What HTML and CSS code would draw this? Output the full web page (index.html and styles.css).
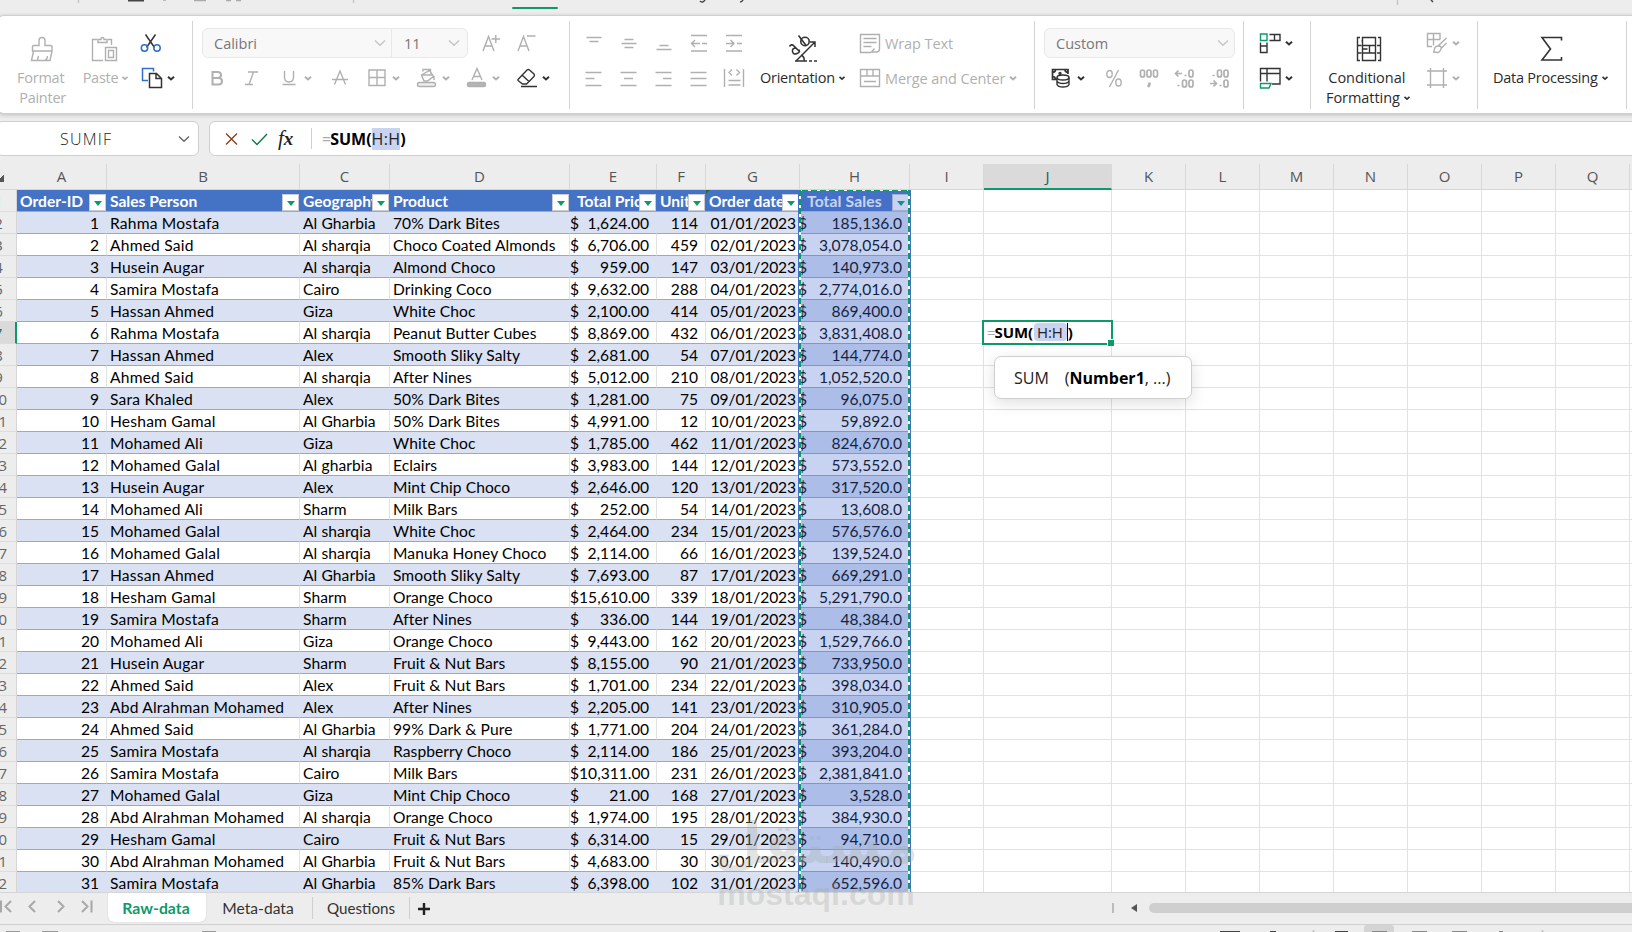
FILE: index.html
```html
<!DOCTYPE html>
<html lang="en">
<head>
    <meta charset="UTF-8">
    <meta name="viewport" content="width=device-width, initial-scale=1.0">
    <title>Raw-data</title>
    <link rel="stylesheet" href="styles.css">
</head>
<body>
<svg class="defs" width="0" height="0">
    <symbol id="chev" viewBox="0 0 16 24"><path d="M5 10.700l3 2.700 3-2.700" stroke-width="2"/></symbol>
    <symbol id="chev-thin" viewBox="0 0 16 24"><path d="M3 9.500l5 4.800 5-4.800" stroke-width="1.300"/></symbol>
</svg>
<div class="menubar">
    <svg width="1632" height="16" viewBox="0 0 1632 16">
        <path d="M78.500 0v3M353.500 0v3M1397.500 0v5" stroke="#c4c4c4"/>
        <path d="M128 .5h16" stroke="#444" stroke-width="2"/>
        <path d="M163 0h3M194 .5h12M226 .5h5M236 .5h5" stroke="#aaa" stroke-width="1.500"/>
        <path d="M700 1q3 2.500 5-1M740 2q2 0 3-2M1431 0l2 2" stroke="#444" stroke-width="1.500" fill="none"/>
        <path d="M513 8h44" stroke="#0e9a68" stroke-width="2" stroke-linecap="round"/>
    </svg>
</div>

<div class="ribbon">
    <div class="group g-clip">
        <div class="big off">
            <svg width="26" height="26" viewBox="0 0 26 26"><path d="M3.500 15v-4.500q0-1 1-1h5.500v-5q0-3 3-3t3 3v5h6q1 0 1 1V15zM4.500 15L2.500 24.500h18.500l2-9.500M8.500 24l1-4M16.500 24q2-1 2-4"/></svg>
            <span>Format<br>&thinsp;Painter</span>
        </div>
        <div class="big off paste">
            <svg width="28" height="26" viewBox="0 0 28 26"><path d="M7 3.500H2.500v21H13M18 3.500h3.500V9M8 6.500V3.500h3q0-2 1.500-2t1.500 2h3v3zM15.500 11.500h11v13h-11zM18.500 14.500h5v7h-5z"/></svg>
            <span>Paste<svg class="chev"><use href="#chev"/></svg></span>
        </div>
        <div class="pair">
            <svg width="24" height="24" viewBox="0 0 24 24"><path d="M6.500 3.500l9 13M16.500 3.500l-9 13" stroke="#333" stroke-width="1.500"/><circle cx="5.500" cy="17" r="3.200" stroke="#2f6fd0" stroke-width="1.500"/><circle cx="18" cy="17" r="3.200" stroke="#2f6fd0" stroke-width="1.500"/></svg>
            <div class="line"><svg width="24" height="24" viewBox="0 0 24 24"><path d="M9 14.500H3.500V2.500h11v3" stroke="#2f6fd0" stroke-width="1.500"/><path d="M10.500 7.500h7l5 5v9h-12zM17 7.500v5h5.500" stroke="#333" stroke-width="1.500"/></svg><svg class="chev dark"><use href="#chev"/></svg></div>
        </div>
    </div>

    <div class="group g-font">
        <div class="line top">
            <div class="select font"><span>Calibri</span><svg class="chev"><use href="#chev-thin"/></svg></div>
            <div class="select size"><span>11</span><svg class="chev"><use href="#chev-thin"/></svg></div>
            <svg class="aplus" width="24" height="24" viewBox="0 0 24 24"><path d="M3 20L8.500 5.500 14 20M5 15h7M11.500 8h8.500M15.800 4v8"/></svg>
            <svg class="aminus" width="24" height="24" viewBox="0 0 24 24"><path d="M3 20L8.500 5.500 14 20M5 15h7M12 5h8.500"/></svg>
        </div>
        <div class="icons">
            <svg viewBox="0 0 24 24"><path d="M7.500 6h5q3.500 0 3.500 3t-3.500 3h-5zM7.500 12h6q3.500 0 3.500 3.200t-3.500 3.300h-6z" stroke-width="2"/></svg>
            <svg viewBox="0 0 24 24"><path d="M9 6h10M6 18.500h8M14.500 6L10 18.500"/></svg>
            <svg viewBox="0 0 24 24"><path d="M7.500 5v6q0 5 4.500 5t4.500-5V5M5.500 18.500h13"/></svg>
            <svg class="chev"><use href="#chev"/></svg>
            <svg viewBox="0 0 24 24"><path d="M4 13.500h16M6.500 18.500L12 5l5.500 13.500"/></svg>
            <svg viewBox="0 0 24 24"><path d="M4 4h16v15.500H4zM12 4v15.500M4 11.500h16"/></svg>
            <svg class="chev"><use href="#chev"/></svg>
            <svg viewBox="0 0 24 24"><path d="M8 5.500V3.500h7.500v4M6.500 9l8-4.500 4 6-6 4.500h-3.500zM19 10v4M6 9h11"/><rect x="2.500" y="16.500" width="18" height="4" rx="2" fill="#eee"/></svg>
            <svg class="chev"><use href="#chev"/></svg>
            <svg viewBox="0 0 24 24"><path d="M7 14l5-11.500L17 14M9 10.500h6"/><rect x="2.500" y="16.500" width="18" height="4" rx="1.500" fill="#b5b5b5"/></svg>
            <svg class="chev"><use href="#chev"/></svg>
            <svg class="dark" viewBox="0 0 24 24"><path d="M3 13.500L12 4q1.500-1 2.500 0L19 8q1 1.500 0 2.500l-7.500 7.500H7.500L3 14.500zM7.500 9.500l7 6.500M6 20.500h16"/></svg>
            <svg class="chev dark"><use href="#chev"/></svg>
        </div>
    </div>

    <div class="group g-align">
        <div class="aligns">
            <svg viewBox="0 0 24 24"><path d="M4.500 6.500h15M7.500 10.500h9"/></svg>
            <svg viewBox="0 0 24 24"><path d="M7.500 8.500h9M4.500 12.500h15M7.500 16.500h9"/></svg>
            <svg viewBox="0 0 24 24"><path d="M7.500 14.500h9M4.500 18.500h15"/></svg>
            <svg viewBox="0 0 24 24"><path d="M4 4.500h16M4 20h16M5 12.500h8M8 9l-3.500 3.500L8 16M15 12.500h5"/></svg>
            <svg viewBox="0 0 24 24"><path d="M4 4.500h16M4 20h16M4 12.500h7M8.500 9l3.500 3.500L8.500 16M15 12.500h5"/></svg>
            <svg viewBox="0 0 24 24"><path d="M3.500 6.500h16M3.500 12.500h9M3.500 19.500h16"/></svg>
            <svg viewBox="0 0 24 24"><path d="M3.500 6.500h16M7 12.500h9M3.500 19.500h16"/></svg>
            <svg viewBox="0 0 24 24"><path d="M3.500 6.500h16M11 12.500h8.500M3.500 19.500h16"/></svg>
            <svg viewBox="0 0 24 24"><path d="M3.500 6.500h16M3.500 12.500h16M3.500 19.500h16"/></svg>
            <svg viewBox="0 0 24 24"><path d="M2.500 3v18M21.500 3v18M10 3.500L7 6.500l3 3M14.500 3.500l3 3-3 3M6.500 14.500h12M6.500 19h12"/></svg>
        </div>
        <div class="big orient dark">
            <svg width="30" height="28" viewBox="0 0 30 28"><path d="M2.500 12.500q2-3 4.500-.5l6 6M9 14q-4 0-3.500 3.500t4.500 2 1.500-4M11.500 1.500l8 10.500" stroke-width="1.600"/><circle cx="18" cy="7.500" r="4.200" stroke-width="1.600"/><path d="M9 27L27.500 8.500M23 8h5v5M8 27h12M22 27h3M27 27h3M14 21q4 2 3 6" stroke-width="1.500"/></svg>
            <span>Orientation<svg class="chev"><use href="#chev"/></svg></span>
        </div>
        <div class="pair wide off">
            <div class="line"><svg width="24" height="24" viewBox="0 0 24 24"><path d="M21.500 13V3.500h-19v18H13M5.500 7.500h13M5.500 11.500h13M5.500 15.500h8M21.500 13v5q0 3-3 3h-5l3-3.500"/></svg><span>Wrap Text</span></div>
            <div class="line"><svg width="24" height="24" viewBox="0 0 24 24"><path d="M2.500 3.500h19v17h-19zM2.500 10h19M9 3.500V10M15 3.500V10M6 15.500h12"/></svg><span>Merge and Center</span><svg class="chev"><use href="#chev"/></svg></div>
        </div>
    </div>

    <div class="group g-number">
        <div class="select custom"><span>Custom</span><svg class="chev"><use href="#chev-thin"/></svg></div>
        <div class="icons">
            <svg class="dark" viewBox="0 0 24 24"><path d="M8 13.500H3.500v-10H19V8M3.500 6.500q3 0 3-3M16 3.500q0 3 3 3M3.500 10.500q3 0 3 3" stroke-width="1.700"/><circle cx="11" cy="7.500" r="1"/><ellipse cx="14" cy="11.500" rx="6" ry="2.500"/><path d="M8 11.500v7q1 2.500 6 2.500t6-2.500v-7M8 15q1 2.500 6 2.500t6-2.500"/></svg>
            <svg class="chev dark"><use href="#chev"/></svg>
            <svg viewBox="0 0 24 24"><ellipse cx="7.500" cy="8" rx="2.700" ry="3.500"/><ellipse cx="16.500" cy="16.500" rx="2.700" ry="3.500"/><path d="M16.500 4L7.500 21"/></svg>
            <svg viewBox="0 0 24 24" class="bold"><rect x="3.500" y="4" width="4" height="7" rx="2"/><rect x="10" y="4" width="4" height="7" rx="2"/><rect x="16.500" y="4" width="4" height="7" rx="2"/><path d="M12.500 16.500v2l-1.500 2.500" stroke-width="2.500"/></svg>
            <svg viewBox="0 0 24 24" class="bold"><path d="M10 7.500H3.500M6.500 4.500l-3 3 3 3M12.500 9.500h2M5.500 19.500h2"/><rect x="17" y="4" width="4" height="7" rx="2"/><rect x="10.500" y="14" width="4" height="7" rx="2"/><rect x="17" y="14" width="4" height="7" rx="2"/></svg>
            <svg viewBox="0 0 24 24" class="bold"><path d="M3 17.500h6.500M6.500 14.500l3 3-3 3M5.500 9.500h2M12.500 19.500h2"/><rect x="10.500" y="4" width="4" height="7" rx="2"/><rect x="17" y="4" width="4" height="7" rx="2"/><rect x="17" y="14" width="4" height="7" rx="2"/></svg>
        </div>
    </div>

    <div class="group g-cells dark">
        <div class="line"><svg width="24" height="24" viewBox="0 0 24 24"><path d="M11.500 3.500H22v6H11.500M16.500 3.500v6M9 11.500v10H2.500v-10M2.500 15h6.500"/><path d="M2.500 3h6.500v6.500H2.500z" stroke="#0e9a68"/></svg><svg class="chev"><use href="#chev"/></svg></div>
        <div class="line"><svg width="24" height="24" viewBox="0 0 24 24"><path d="M2.500 15.500v-13h19.500v15.500h-8M2.500 7.500h19.500M9 2.500v13"/><path d="M2.500 17.500h10.500l-2 4.500H2.500z" stroke="#0e9a68"/></svg><svg class="chev"><use href="#chev"/></svg></div>
    </div>

    <div class="group g-format">
        <div class="big dark cond">
            <svg width="28" height="26" viewBox="0 0 28 26"><path d="M5 1.500H2.500v23H5M23 1.500h2.500v23H23M2.500 9.500h4M2.500 17h4M22 9.500h4M22 17h4M7.500 1.500h13v23h-13zM7.500 9.500h13M7.500 17h13M14.500 9.500V17M7.500 5h-1M7.500 13h5"/></svg>
            <span>&thinsp;Conditional<br>Formatting<svg class="chev"><use href="#chev"/></svg></span>
        </div>
        <div class="pair off">
            <div class="line"><svg width="24" height="24" viewBox="0 0 24 24"><path d="M15 8V2.500H2.500v13H7M8.500 2.500v12M2.500 8.500h13M21.500 7L13 15M21.500 12l-5 5M8 21q1 0 1.500-3t4-3 2.500 3-3 3.500z"/></svg><svg class="chev"><use href="#chev"/></svg></div>
            <div class="line"><svg width="24" height="24" viewBox="0 0 24 24"><path d="M5.500 2v20M18.500 2v20M2 5h20M2 19h20"/></svg><svg class="chev"><use href="#chev"/></svg></div>
        </div>
    </div>

    <div class="group g-data">
        <div class="big dark">
            <svg width="26" height="26" viewBox="0 0 26 26"><path d="M22.500 4.500v-3H3l8.500 11.500L3 24h19.500v-3" stroke-width="1.600"/></svg>
            <span>Data Processing<svg class="chev"><use href="#chev"/></svg></span>
        </div>
    </div>
</div>

<div class="formula-row">
    <div class="name-box"><span>SUMIF</span><svg class="chev"><use href="#chev-thin"/></svg></div>
    <div class="formula-bar">
        <svg width="24" height="24" viewBox="0 0 24 24"><path d="M6 6.500l11 11M17 6.500l-11 11" stroke="#8a3f1d"/></svg>
        <svg width="24" height="24" viewBox="0 0 24 24"><path d="M4 12.500l5 5L19 7" stroke="#0b7a4b"/></svg>
        <i class="fx">f<b>x</b></i>
        <div class="formula"><em>=</em><b>SUM(</b><mark>H:H</mark><b>)</b></div>
    </div>
</div>

<div class="sheet">
    <div class="row heads" id="heads"></div>
    <div id="rows"></div>
    <div class="corner-mark"></div>
    <div class="ants"></div>
    <div class="editor"><em>=</em><b>SUM(</b><mark>H:H</mark><s></s><b>)</b></div>
    <div class="hint"><span>SUM</span><span>(<b>Number1</b>, ...)</span></div>
</div>

<div class="tabs">
    <svg class="nav" width="108" height="24" viewBox="0 0 108 24"><path d="M1 5.500v12M11 6l-5.500 5.500L11 17M35 6l-5.500 5.500L35 17M58 6l5.500 5.500L58 17M82 6l5.500 5.500L82 17M91.500 5.500v12"/></svg>
    <div class="tab active">Raw-data</div>
    <div class="tab meta">Meta-data</div>
    <div class="tab quest">Questions</div>
    <svg class="plus" width="16" height="16" viewBox="0 0 16 16"><path d="M8 2v12M2 8h12"/></svg>
    <div class="scroll"><i class="grip"></i><i class="arrow"></i><i class="thumb"></i></div>
</div>
<div class="status">
    <svg width="1632" height="8" viewBox="0 0 1632 8">
        <path d="M6 7h14M42 7h16M202 7h14" stroke="#999" stroke-width="2"/>
        <rect x="1364" y="0" width="30" height="10" rx="3" fill="#d4d4d4" stroke="none"/>
        <path d="M1220 7h20M1270 7h6M1335 7h13" stroke="#444" stroke-width="2"/>
        <path d="M1372 7h15M1412 7h15M1452 7h15M1499 7h4" stroke="#888" stroke-width="2"/>
        <path d="M1313.500 5v3M1542.500 5v3" stroke="#bbb"/>
    </svg>
</div>
<div class="watermark"><p class="ar">مستقل</p><p class="en">mostaql.com</p></div>

<script>
const orders = [
    ["Rahma Mostafa", "Al Gharbia", "70% Dark Bites", "1,624.00", 114, "185,136.0"],
    ["Ahmed Said", "Al sharqia", "Choco Coated Almonds", "6,706.00", 459, "3,078,054.0"],
    ["Husein Augar", "Al sharqia", "Almond Choco", "959.00", 147, "140,973.0"],
    ["Samira Mostafa", "Cairo", "Drinking Coco", "9,632.00", 288, "2,774,016.0"],
    ["Hassan Ahmed", "Giza", "White Choc", "2,100.00", 414, "869,400.0"],
    ["Rahma Mostafa", "Al sharqia", "Peanut Butter Cubes", "8,869.00", 432, "3,831,408.0"],
    ["Hassan Ahmed", "Alex", "Smooth Sliky Salty", "2,681.00", 54, "144,774.0"],
    ["Ahmed Said", "Al sharqia", "After Nines", "5,012.00", 210, "1,052,520.0"],
    ["Sara Khaled", "Alex", "50% Dark Bites", "1,281.00", 75, "96,075.0"],
    ["Hesham Gamal", "Al Gharbia", "50% Dark Bites", "4,991.00", 12, "59,892.0"],
    ["Mohamed Ali", "Giza", "White Choc", "1,785.00", 462, "824,670.0"],
    ["Mohamed Galal", "Al gharbia", "Eclairs", "3,983.00", 144, "573,552.0"],
    ["Husein Augar", "Alex", "Mint Chip Choco", "2,646.00", 120, "317,520.0"],
    ["Mohamed Ali", "Sharm", "Milk Bars", "252.00", 54, "13,608.0"],
    ["Mohamed Galal", "Al sharqia", "White Choc", "2,464.00", 234, "576,576.0"],
    ["Mohamed Galal", "Al sharqia", "Manuka Honey Choco", "2,114.00", 66, "139,524.0"],
    ["Hassan Ahmed", "Al Gharbia", "Smooth Sliky Salty", "7,693.00", 87, "669,291.0"],
    ["Hesham Gamal", "Sharm", "Orange Choco", "15,610.00", 339, "5,291,790.0"],
    ["Samira Mostafa", "Sharm", "After Nines", "336.00", 144, "48,384.0"],
    ["Mohamed Ali", "Giza", "Orange Choco", "9,443.00", 162, "1,529,766.0"],
    ["Husein Augar", "Sharm", "Fruit & Nut Bars", "8,155.00", 90, "733,950.0"],
    ["Ahmed Said", "Alex", "Fruit & Nut Bars", "1,701.00", 234, "398,034.0"],
    ["Abd Alrahman Mohamed", "Alex", "After Nines", "2,205.00", 141, "310,905.0"],
    ["Ahmed Said", "Al Gharbia", "99% Dark & Pure", "1,771.00", 204, "361,284.0"],
    ["Samira Mostafa", "Al sharqia", "Raspberry Choco", "2,114.00", 186, "393,204.0"],
    ["Samira Mostafa", "Cairo", "Milk Bars", "10,311.00", 231, "2,381,841.0"],
    ["Mohamed Galal", "Giza", "Mint Chip Choco", "21.00", 168, "3,528.0"],
    ["Abd Alrahman Mohamed", "Al sharqia", "Orange Choco", "1,974.00", 195, "384,930.0"],
    ["Hesham Gamal", "Cairo", "Fruit & Nut Bars", "6,314.00", 15, "94,710.0"],
    ["Abd Alrahman Mohamed", "Al Gharbia", "Fruit & Nut Bars", "4,683.00", 30, "140,490.0"],
    ["Samira Mostafa", "Al Gharbia", "85% Dark Bars", "6,398.00", 102, "652,596.0"]
];
const titles = ["Order-ID", "Sales Person", "Geography", "Product", "Total Price", "Units", "Order date", "Total Sales"];
const letters = "ABCDEFGHIJKLMNOPQR".split("");

document.getElementById("heads").innerHTML = "<div></div>" + letters.map(l => `<div class="head-${l}">${l === "R" ? "" : l}</div>`).join("");

const empty = "<div class='cell'></div>".repeat(10);
const esc = t => String(t).replace("&", "&amp;");
const money = v => `<span>$</span><span>${v}</span>`;

let html = `<div class="row titles"><div class="num">1</div>` + titles.map((t, i) =>
    `<div class="cell title c${letters[i]}"><span>${t}</span><button class="filter"></button></div>`).join("") + empty + "</div>";

orders.forEach((o, i) => {
    const date = String(i + 1).padStart(2, "0") + "/01/2023";
    const cells = [i + 1, esc(o[0]), o[1], esc(o[2]), money(o[3]), o[4], date, money(o[5])];
    html += `<div class="row ${i % 2 ? "plain" : "band"}"><div class="num${i === 5 ? " current" : ""}">${i + 2}</div>` +
        cells.map((c, k) => `<div class="cell data c${letters[k]}">${c}</div>`).join("") + empty + "</div>";
});
document.getElementById("rows").innerHTML = html;
</script>
</body>
</html>
```
FILE: styles.css
```css
*{
    margin: 0;
    padding: 0;
    box-sizing: border-box;
}
body{
    position: relative;
    width: 1632px;
    height: 932px;
    overflow: hidden;
    background: #ededed;
    font-family: "Open Sans", "Noto Sans", sans-serif;
    font-size: 14.5px;
    color: #333;
}
svg{
    display: block;
    flex: none;
    fill: none;
    stroke: #b0b0b0;
    stroke-width: 1.4;
}
.defs{
    position: absolute;
}
.menubar{
    height: 15px;
}

/* ribbon */
.ribbon{
    display: flex;
    width: 1650px;
    height: 99px;
    margin-left: -4px;
    padding: 0 0 0 3px;
    background: #fff;
    border: 1px solid #cfd1d1;
    border-radius: 8px;
    box-shadow: 0 1px 4px rgba(0, 0, 0, 0.2);
}
.group{
    flex: none;
    height: 88px;
    margin-top: 5px;
    border-right: 1px solid #d3d3d3;
}
.line{
    display: flex;
    align-items: center;
    height: 24px;
    white-space: nowrap;
}
.off{
    color: #b0b0b0;
}
.dark, .dark svg, svg.dark{
    color: #2b2b2b;
    stroke: #333;
}
.bold{
    stroke-width: 1.7;
}
.chev{
    width: 16px;
    height: 24px;
}
.big{
    display: flex;
    flex-direction: column;
    align-items: center;
    padding-top: 15px;
    white-space: nowrap;
}
.big span{
    margin-top: 6px;
    line-height: 20px;
    letter-spacing: -0.25px;
}
.big .chev{
    display: inline-block;
    margin: -3px 0 0 -1px;
    vertical-align: middle;
    height: 20px;
}
.pair{
    display: grid;
    gap: 11px;
    align-content: start;
    padding-top: 10px;
}
.g-clip{
    display: flex;
    width: 193px;
}
.g-clip .big{
    margin-left: 18px;
    width: 47px;
}
.g-clip .paste{
    width: 50px;
}
.paste > svg{
    margin-left: -8px;
}
.g-clip .pair{
    margin-left: 6px;
}
.g-font{
    width: 377px;
    padding: 7px 0 0 9px;
}
.line.top{
    height: 30px;
}
.select{
    display: flex;
    justify-content: space-between;
    align-items: center;
    height: 30px;
    padding: 0 3px 0 11px;
    border: 1px solid #e8e8e8;
    background: #f8f8f8;
    color: #777;
}
.select svg{
    stroke: #c4c4c4;
}
.select.font{
    width: 190px;
    border-radius: 6px 0 0 6px;
}
.select.size{
    width: 77px;
    margin-left: -1px;
    padding: 0 5px 0 12px;
    border-radius: 0 6px 6px 0;
}
.aplus{
    margin-left: 12px;
}
.aminus{
    margin-left: 11px;
}
.icons{
    display: grid;
    margin-top: 8px;
    height: 24px;
}
.icons svg{
    width: 24px;
    height: 24px;
}
.icons .chev{
    width: 16px;
}
.g-font .icons{
    margin-left: 3px;
    grid-template-columns: 34px 38px 23px 28px 36.5px 23.5px 27px 23px 27px 23px 27px 23px 16px;
}
.g-align{
    display: flex;
    width: 465px;
}
.aligns{
    display: grid;
    grid-template-columns: repeat(5, 35px);
    grid-template-rows: 24px 24px;
    row-gap: 11px;
    margin: 10px 0 0 12px;
}
.aligns svg{
    width: 24px;
    height: 24px;
}
.orient{
    width: 96px;
    margin-left: 1px;
    padding-top: 13px;
    align-items: flex-start;
}
.orient > svg{
    margin-left: 29px;
}
.orient span{
    margin-left: 2px;
}
.wide{
    margin-left: 4px;
}
.wide span{
    margin-left: 3px;
    letter-spacing: -0.1px;
}
.g-number{
    width: 209px;
    padding: 7px 0 0 9px;
}
.select.custom{
    width: 191px;
    border-radius: 6px;
}
.g-number .icons{
    margin-left: 5px;
    grid-template-columns: 24px 29px 35px 35px 35px 24px;
}
.g-cells{
    display: grid;
    align-content: start;
    gap: 11px;
    width: 67px;
    padding: 10px 0 0 14px;
}
.g-cells .chev{
    margin-left: -1px;
}
.g-format{
    display: flex;
    width: 167px;
}
.cond{
    width: 90px;
    margin-left: 15px;
    align-items: flex-start;
}
.cond > svg{
    margin-left: 29px;
}
.cond span{
    letter-spacing: -0.05px;
}
.g-format .pair{
    margin-left: 9px;
}
.g-format .pair .chev{
    margin-left: -1px;
}
.g-data{
    width: 149px;
}
.g-data .big{
    align-items: flex-start;
    margin-left: 15px;
}
.g-data .big > svg{
    margin-left: 46px;
}

/* formula row */
.formula-row{
    display: flex;
    height: 50px;
    padding-top: 7px;
}
.name-box, .formula-bar{
    display: flex;
    flex: none;
    align-items: center;
    height: 35px;
    background: #fff;
    border: 1px solid #cfcfcf;
    border-radius: 6px;
}
.name-box{
    width: 203px;
    margin-left: -4px;
    padding: 0 6px 0 63px;
    justify-content: space-between;
    font-size: 16px;
    font-weight: 300;
    letter-spacing: 1.2px;
    color: #222;
}
.name-box svg{
    stroke: #666;
}
.formula-bar{
    width: 1440px;
    margin-left: 10px;
    padding-left: 10px;
    font-size: 16px;
}
.formula-bar svg + svg{
    margin-left: 4px;
}
.fx{
    width: 33px;
    margin-left: 6px;
    font: italic 21px "Liberation Serif", serif;
    color: #222;
}
.fx b{
    font-size: 19px;
}
.formula{
    display: flex;
    align-items: center;
    height: 21px;
    padding-left: 10px;
    border-left: 1px solid #d0d0d0;
    color: #000;
}
.formula mark{
    letter-spacing: 0.3px;
}
em{
    font-style: normal;
    color: #aaa;
}
.formula em, .editor em{
    margin-right: -1px;
}
mark{
    background: #c9d4f1;
    color: #222;
}

/* sheet */
.sheet{
    position: relative;
    height: 729px;
    overflow: hidden;
    background: #fff;
    border-bottom: 1px solid #d5d5d5;
}
.row{
    display: grid;
    grid-template-columns: 17px 90px 193px 90px 180px 87px 49px 94px 110px 74px 128px repeat(8, 74px);
    grid-auto-rows: 22px;
    width: 1704px;
}
.heads{
    grid-auto-rows: 26px;
    background: #ededed;
    color: #555;
    font-size: 15px;
    line-height: 24px;
    text-align: center;
}
.heads div{
    border-right: 1px solid #d8d8d8;
    border-bottom: 1px solid #d5d5d5;
}
.heads div:first-child{
    border-right: none;
    background: linear-gradient(135deg, transparent 40%, #555 40%) 0 10px / 4px 8px no-repeat;
}
.heads .head-J{
    background: #dadada;
    border-bottom: 2px solid #0e9a68;
    color: #11635d;
}
.num{
    display: flex;
    justify-content: center;
    align-items: center;
    margin-left: -19px;
    background: #ededed;
    border-right: 1px solid #d5d5d5;
    border-bottom: 1px solid #dcdcdc;
    color: #666;
    font-size: 15px;
}
.num.current{
    background: #dadada;
    border-right: 2px solid #0e9a68;
    color: #0e7a55;
}
.cell{
    border-right: 1px solid #e2e2e2;
    border-bottom: 1px solid #e2e2e2;
    font-family: Lato, sans-serif;
    font-size: 15.6px;
    line-height: 22px;
    color: #000;
    white-space: nowrap;
}
.data{
    padding-left: 3px;
    border-bottom-color: #8ea9db;
}
.band .data{
    background: #d9e1f2;
    border-right-color: #d9e1f2;
}
.data.cB{
    letter-spacing: 0.2px;
}
.data.cC, .data.cD{
    letter-spacing: 0.08px;
}
.data.cA, .data.cF{
    padding-right: 7px;
    text-align: right;
}
.data.cG{
    padding-right: 3px;
    text-align: right;
    letter-spacing: -0.1px;
}
.data.cE, .data.cH{
    display: flex;
    justify-content: space-between;
    padding: 0 7px 0 0;
}
.data.cH span:first-child{
    margin-left: -2px;
}
.title{
    display: flex;
    position: relative;
    padding-left: 3px;
    overflow: hidden;
    background: #4472c4;
    border-right: none;
    border-bottom-color: #8ea9db;
    color: #fff;
    font-weight: 700;
}
.title.cE, .title.cH{
    padding-left: 7px;
}
.title.cH{
    letter-spacing: 0.15px;
}
.filter{
    position: absolute;
    right: 1px;
    top: 4px;
    width: 17px;
    height: 17px;
    background: #fff;
    border: 1px solid #c8ccd0;
}
.filter::after{
    content: "";
    position: absolute;
    left: 4px;
    top: 6px;
    border: 4px solid transparent;
    border-top: 5px solid #0e9a68;
    border-bottom: none;
}
.cH{
    position: relative;
}
.cH::after{
    content: "";
    position: absolute;
    inset: 0 -1px -1px 0;
    background: rgba(68, 110, 205, 0.3);
}
.ants{
    position: absolute;
    left: 798px;
    top: 26px;
    width: 113px;
    height: 720px;
    border: solid #4472c4;
    border-width: 0 1px;
    background:
        repeating-linear-gradient(#0e9a68 0 6px, #fff 6px 9px) 0 0 / 2px 100% no-repeat,
        repeating-linear-gradient(#0e9a68 0 6px, #fff 6px 9px) 100% 0 / 2px 100% no-repeat,
        repeating-linear-gradient(90deg, #fff 0 3px, #0e9a68 3px 9px) 0 0 / 100% 1px no-repeat;
}
.corner-mark{
    position: absolute;
    left: 706px;
    top: 26px;
    border: 2px solid #2c6b2c;
    border-right-color: transparent;
    border-bottom-color: transparent;
}
.editor{
    position: absolute;
    left: 982px;
    top: 156px;
    width: 131px;
    height: 25px;
    display: flex;
    align-items: center;
    padding: 0 0 2px 3px;
    border: 2px solid #0e9a68;
    background: #fff;
    color: #000;
    font-size: 15px;
    letter-spacing: -0.1px;
}
.editor mark{
    height: 18px;
    line-height: 18px;
    margin-left: 1px;
    padding: 0 4px 0 3px;
    border-radius: 4px;
}
.editor s{
    width: 1px;
    height: 18px;
    background: #000;
}
.editor::after{
    content: "";
    position: absolute;
    right: -3px;
    bottom: -3px;
    width: 6px;
    height: 6px;
    background: #0e9a68;
    border: solid #fff;
    border-width: 1px 0 0 1px;
}
.hint{
    position: absolute;
    left: 994px;
    top: 192px;
    height: 43px;
    width: 198px;
    display: flex;
    align-items: center;
    gap: 16px;
    padding-left: 19px;
    background: #fff;
    border: 1px solid #cfcfcf;
    border-radius: 7px;
    box-shadow: 0 4px 16px rgba(0, 0, 0, 0.13);
    font-size: 16px;
    color: #222;
    white-space: nowrap;
}
.hint b{
    color: #000;
}

/* bottom */
.tabs{
    display: flex;
    height: 32px;
    font-family: Lato, sans-serif;
    font-size: 15.2px;
    border-bottom: 1px solid #d0d0d0;
}
.nav{
    margin-top: 2px;
    stroke: #a8a8a8;
    stroke-width: 2;
}
.tab{
    height: 29px;
    line-height: 30px;
    text-align: center;
}
.active{
    width: 98px;
    padding-right: 2px;
    background: #fff;
    border-radius: 0 0 6px 6px;
    color: #0e9a68;
    font-weight: 700;
    font-size: 15.8px;
    box-shadow: 0 0 1px #aaa;
}
.meta{
    width: 106px;
    padding-right: 2px;
    font-size: 15.6px;
}
.quest{
    width: 98px;
    height: 22px;
    margin-top: 4px;
    line-height: 22px;
    border: solid #cfcfcf;
    border-width: 0 1px;
}
.plus{
    margin: 8px 0 0 6px;
    stroke: #222;
    stroke-width: 2.4;
}
.scroll{
    display: flex;
    align-items: center;
    height: 30px;
    margin-left: auto;
    width: 520px;
}
.grip{
    width: 2px;
    height: 10px;
    background: #bbb;
}
.arrow{
    margin-left: 17px;
    border: 4px solid transparent;
    border-right: 6px solid #555;
    border-left: none;
}
.thumb{
    flex: 1;
    height: 10px;
    margin-left: 12px;
    border-radius: 5px 0 0 5px;
    background: #cfcfcf;
}
.status{
    height: 8px;
}
.watermark{
    position: absolute;
    left: 712px;
    top: 812px;
    width: 208px;
    color: rgba(165, 170, 170, 0.32);
    text-align: center;
    white-space: nowrap;
}
.ar{
    font: bold 56px/64px "DejaVu Sans", sans-serif;
}
.en{
    margin-top: 0;
    font: bold 32px/36px "Liberation Sans", sans-serif;
}
```
